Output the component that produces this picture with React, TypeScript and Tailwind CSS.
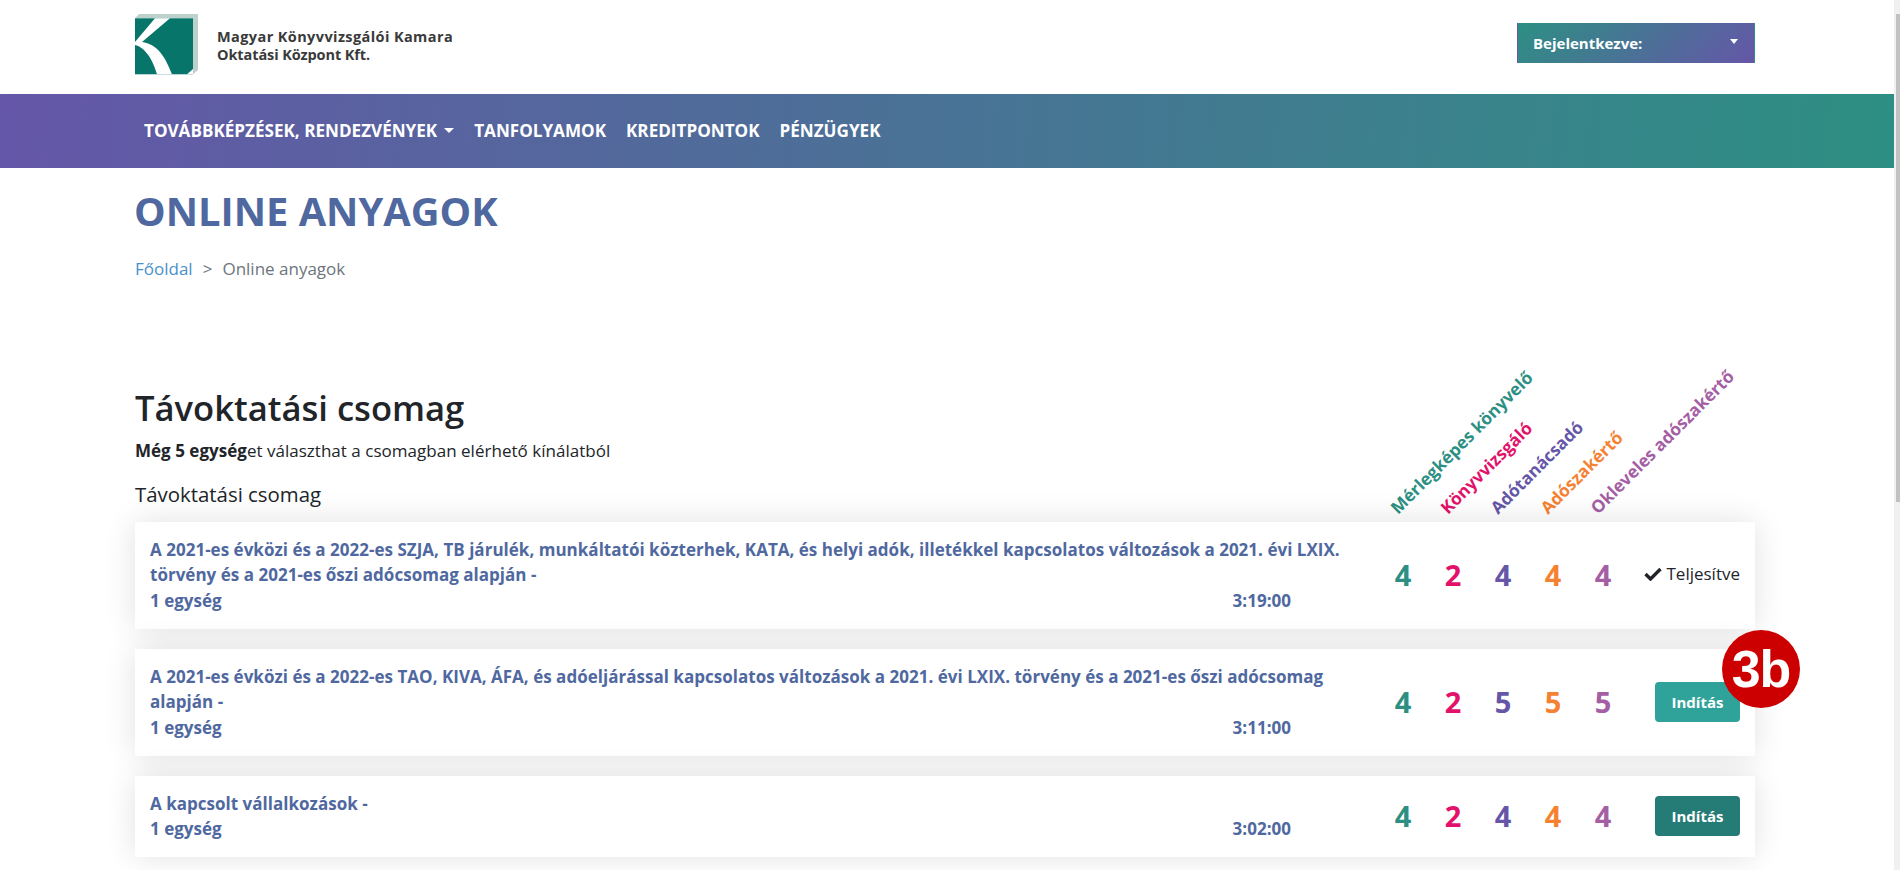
import React from "react";

const cols = ["text-[#2d8f83]", "text-[#e2126b]", "text-[#6556a8]", "text-[#f58233]", "text-[#a45ea4]"];

const Row = ({ lines, nums, time, action, pad, badge }: any) => (
  <div className={`relative flex items-center bg-white shadow-[0_0_30px_rgba(0,0,0,0.12)] pl-[15px] pr-[15px] ${pad}`}>
    <div className="w-[1203px] shrink-0 text-[17px] leading-[25.5px] font-bold tracking-[0.018px] whitespace-nowrap text-[#4f689f]">
      {lines.map((l: string) => <div key={l}>{l}</div>)}
      <div className="flex justify-between pr-[62px]"><span>1 egység</span><span>{time}</span></div>
    </div>
    <div className="ml-[25px] flex">
      {nums.map((n: number, i: number) => (
        <div key={i} className={`w-[50px] text-center text-[29px] leading-[40px] font-bold ${cols[i]}`}>{n}</div>
      ))}
    </div>
    <div className="ml-auto w-[85px] flex justify-end">{action}</div>
    {badge && (
      <div className="absolute right-[-45px] top-[-19px] flex h-[78px] w-[78px] items-center justify-center rounded-full bg-[#cc0000] text-[52px] font-bold leading-none tracking-[-1px] text-white font-['Liberation_Sans',sans-serif]">3b</div>
    )}
  </div>
);

const Btn = ({ dark }: { dark?: boolean }) => (
  <button className={`h-[40px] w-[85px] rounded-[4px] text-[15px] font-bold text-white ${dark ? "bg-[#257b75]" : "bg-[#2fa39a]"}`}>Indítás</button>
);

const heads = [
  ["Mérlegképes könyvelő", "text-[#2d8f83]"],
  ["Könyvvizsgáló", "text-[#e2126b]"],
  ["Adótanácsadó", "text-[#6556a8]"],
  ["Adószakértő", "text-[#f58233]"],
  ["Okleveles adószakértő", "text-[#a45ea4]"],
];

export default function App() {
  return (
    <div className="flex h-[870px] overflow-hidden bg-white font-['Open_Sans',sans-serif] text-[#212529]">
      <div className="w-[1894px] shrink-0">
        <header className="h-[94px] pl-[135px] pr-[139px] flex items-center justify-between">
          <div className="flex items-center mb-[4px]">
            <svg width="64" height="62" viewBox="0 0 64 62">
              <path d="M4 0H63V56L58 60.3V4.3H0Z" fill="#bcd0cc" />
              <rect x="0" y="4.3" width="58" height="56" fill="#08756a" />
              <path d="M20 4.3H35L7 28C22 30 30 42 37 60.3H22C18 46 10 33 0 31V28Z" fill="#fff" />
              <path d="M58 60.3V55L52 60.3Z" fill="#fff" />
            </svg>
            <div className="ml-[18px] mt-[1px] text-[14.5px] leading-[17.5px] font-bold tracking-[0.4px] text-[#3a3a3a]">
              <div>Magyar Könyvvizsgálói Kamara</div>
              <div className="tracking-[-0.1px]">Oktatási Központ Kft.</div>
            </div>
          </div>
          <div className="mb-[8px] flex h-[40px] w-[238px] items-center justify-between border-l border-r border-l-[#6556a8] border-r-[#2d8f83] bg-[linear-gradient(135deg,#2d8f83,#6556a8)] pl-[15px] pr-[16px] text-[15px] font-bold text-white">
            <span>Bejelentkezve:</span>
            <span className="mt-[-4px] border-x-[4.5px] border-t-[5px] border-x-transparent border-t-white" />
          </div>
        </header>
        <nav className="flex h-[74px] items-center gap-[20px] bg-[linear-gradient(95deg,#6556a8,#2d8f83)] pl-[144px] text-[17.1px] font-bold text-white">
          <span className="flex items-center">TOVÁBBKÉPZÉSEK, RENDEZVÉNYEK<span className="ml-[7px] border-x-[5.5px] border-t-[5px] border-x-transparent border-t-white" /></span>
          <span>TANFOLYAMOK</span>
          <span>KREDITPONTOK</span>
          <span>PÉNZÜGYEK</span>
        </nav>
        <main className="pl-[135px] pr-[139px]">
          <h1 className="ml-[-1px] mt-[17px] text-[39.8px] leading-[52px] font-bold text-[#4f689f]">ONLINE ANYAGOK</h1>
          <div className="mt-[19px] text-[17px] leading-[25.5px] text-[#6c757d]">
            <span className="text-[#4a8fca]">Főoldal</span><span className="mx-[10px]">&gt;</span>Online anyagok
          </div>
          <div className="mt-[102px] flex justify-between h-[131px]">
            <div>
              <h2 className="text-[34.6px] leading-[48px] font-semibold text-[#212529]">Távoktatási csomag</h2>
              <p className="mt-[6px] text-[17px] leading-[25.5px] tracking-[0.02px]"><b>Még 5 egység</b>et választhat a csomagban elérhető kínálatból</p>
              <h3 className="mt-[18px] text-[20.4px] leading-[27px] font-medium">Távoktatási csomag</h3>
            </div>
            <div className="flex w-[369px] items-end pb-[12px]">
              {heads.map(([t, c]) => (
                <div key={t} className="w-[50px] shrink-0 h-0">
                  <div className={`w-0 origin-top-left rotate-[-45deg] whitespace-nowrap text-[17.2px] leading-[22px] font-bold ${c}`}>{t}</div>
                </div>
              ))}
            </div>
          </div>
          <div className="mt-[7px] flex flex-col gap-[20px]">
            <Row pad="h-[107px]" nums={[4, 2, 4, 4, 4]} time="3:19:00"
              lines={["A 2021-es évközi és a 2022-es SZJA, TB járulék, munkáltatói közterhek, KATA, és helyi adók, illetékkel kapcsolatos változások a 2021. évi LXIX.", "törvény és a 2021-es őszi adócsomag alapján -"]}
              action={<span className="flex items-center whitespace-nowrap text-[17px] mb-[2px]"><svg width="18" height="14" viewBox="0 0 18 14" className="mr-[4px]"><path d="M1.5 7L6.5 12L16.5 2" fill="none" stroke="#212529" strokeWidth="3.4" /></svg>Teljesítve</span>} />
            <Row badge pad="h-[107px]" nums={[4, 2, 5, 5, 5]} time="3:11:00"
              lines={["A 2021-es évközi és a 2022-es TAO, KIVA, ÁFA, és adóeljárással kapcsolatos változások a 2021. évi LXIX. törvény és a 2021-es őszi adócsomag", "alapján -"]}
              action={<Btn />} />
            <Row pad="h-[81px]" nums={[4, 2, 4, 4, 4]} time="3:02:00" lines={["A kapcsolt vállalkozások -"]} action={<Btn dark />} />
          </div>
        </main>
      </div>
      <div className="w-[6px] shrink-0 bg-[#f0f0f0] pl-[2px] pt-[14px]"><div className="h-[488px] bg-[#c1c1c1]" /></div>
    </div>
  );
}
